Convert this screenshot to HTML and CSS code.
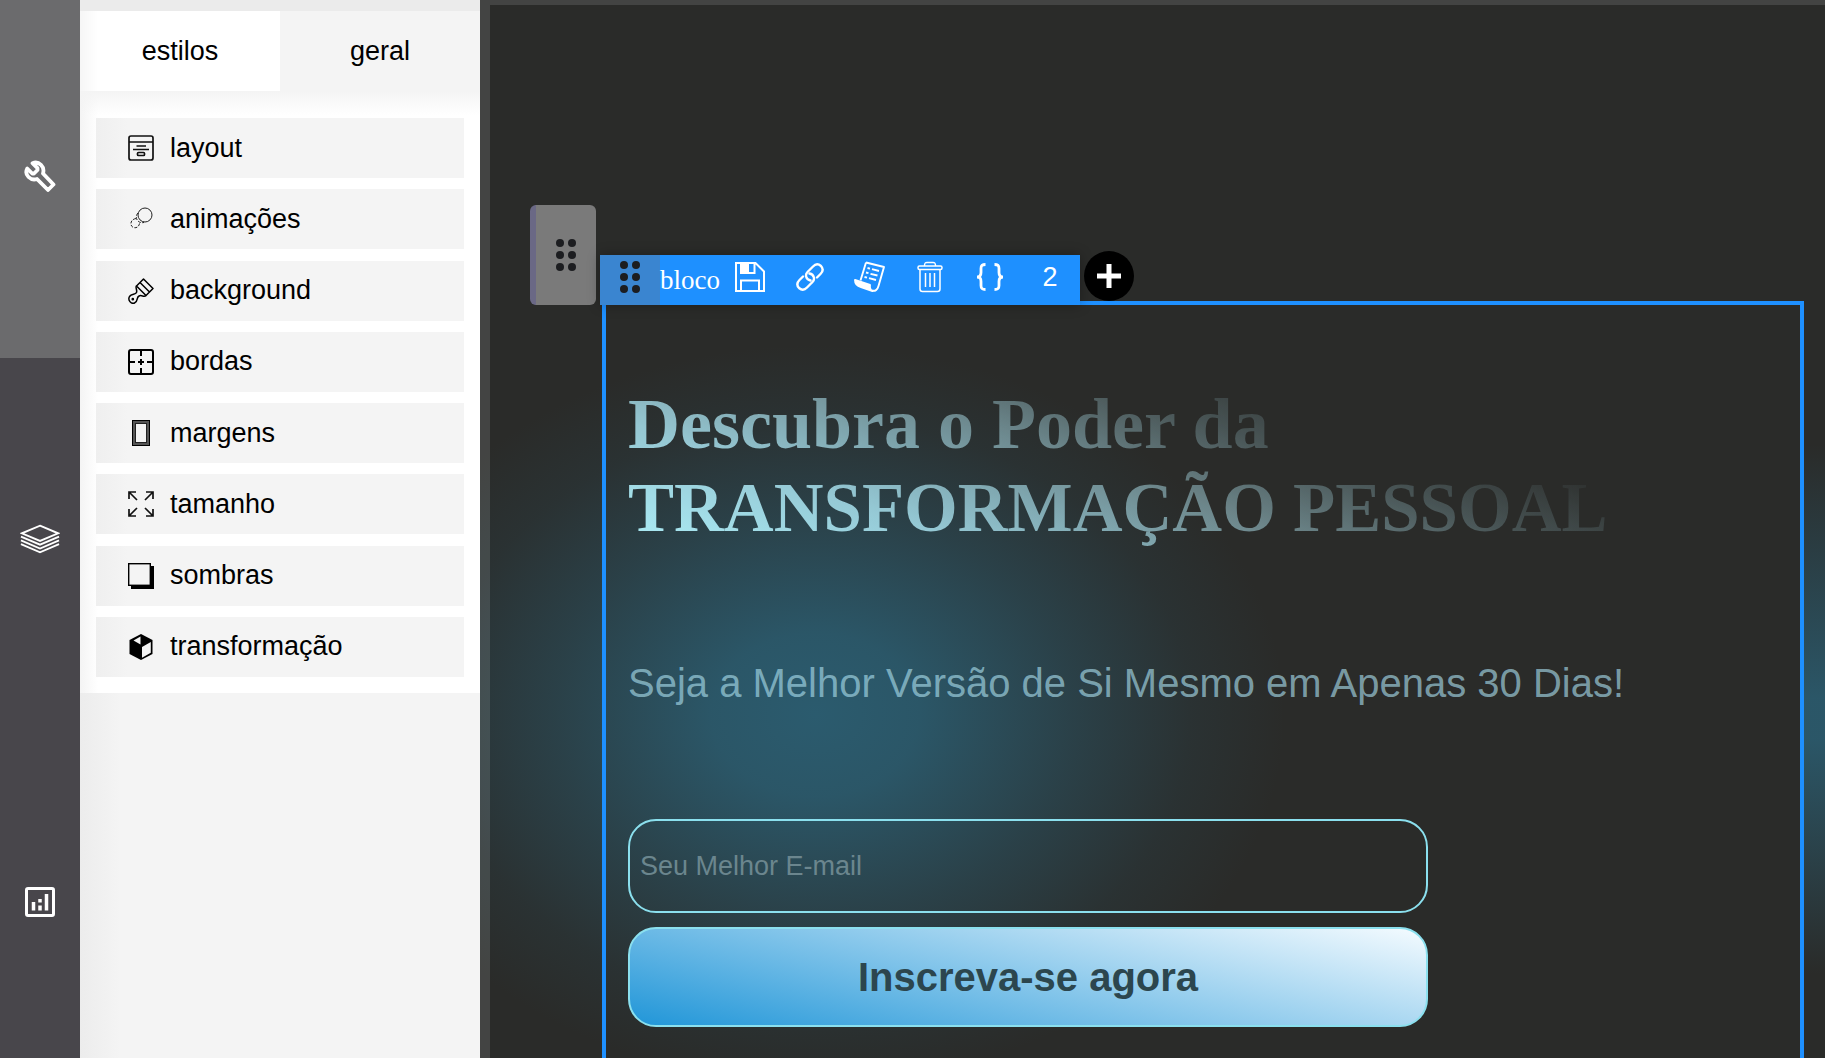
FILE: index.html
```html
<!DOCTYPE html>
<html lang="pt-BR">
<head>
    <meta charset="UTF-8">
    <meta name="viewport" content="width=device-width, initial-scale=1.0">
    <title>Editor</title>
    <link rel="stylesheet" href="styles.css">
</head>
<body>

    <nav class="rail">
        <button class="rail-item active" aria-label="ferramentas">
            <svg width="32" height="32" viewBox="0 0 32 32" fill="none" stroke="#fff" stroke-width="3.800" stroke-linejoin="round">
                <path d="M8.500 3.200 L13.500 8.200 V10 L10 13.500 H8.200 L3.200 8.500 C1.500 12 2.500 15 4.500 17 C7 19.500 10 20 13 19 L24 30 L29.500 24.500 L19 13.500 C20 10 19.300 7 17 4.800 C14.500 2.400 11.500 1.900 8.500 3.200 Z"/>
            </svg>
        </button>
        <button class="rail-item" aria-label="camadas">
            <svg width="40" height="32" viewBox="0 0 42 32" fill="none" stroke="#fff" stroke-width="2">
                <path d="M21 2 L40 10 L21 18 L2 10 Z"/>
                <path d="M1 13.500 L21 22 L41 13.500 M1 17.500 L21 26 L41 17.500 M1 21.500 L21 30 L41 21.500"/>
            </svg>
        </button>
        <button class="rail-item" aria-label="estatísticas">
            <svg width="32" height="32" viewBox="0 0 32 32" fill="none" stroke="#fff" stroke-width="3">
                <rect x="2.500" y="2.500" width="27" height="27" rx="1.500"/>
                <path d="M9.500 16 V24.500 M16 19.500 V24.500 M16 13 V16.500 M22.500 8 V24.500" stroke-width="3.500"/>
            </svg>
        </button>
    </nav>

    <aside class="panel">
        <div class="tabs">
            <button class="tab active">estilos</button>
            <button class="tab">geral</button>
        </div>
        <div class="list">
            <button class="item">
                <svg width="26" height="26" viewBox="0 0 26 26" fill="none" stroke="#111" stroke-width="1.700">
                    <rect x="1" y="1" width="24" height="24" rx="2"/>
                    <path d="M1 7 H25 M8.500 11 H18 M5 14.500 H21"/>
                    <rect x="9.500" y="17.500" width="7" height="3" rx="1"/>
                </svg>
                layout
            </button>
            <button class="item">
                <svg width="26" height="26" viewBox="0 0 26 26" fill="none" stroke="#222" stroke-width="1">
                    <circle cx="17" cy="9" r="7"/>
                    <path d="M10 7 C6 11 9.500 18 16 16.500" stroke-dasharray="3 1.500"/>
                    <path d="M8 12.500 C2 13.500 1.500 20 5.500 21.500 C8.500 22.500 11 20.500 11.500 17.500" stroke-dasharray="3 1.500"/>
                </svg>
                animações
            </button>
            <button class="item">
                <svg width="26" height="26" viewBox="0 0 26 26" fill="none" stroke="#000" stroke-width="1.500" stroke-linejoin="round">
                    <path d="M15.500 1 L25 10.500 L18 17.500 L8.500 8 Z M12 4.500 L21.500 14"/>
                    <path d="M8.500 8 C7 9.500 9.500 12 8.500 14.500 C7.500 17 3.500 15.500 1.500 18.500 C-0.500 22 3 26.500 6.500 25 C10.500 23.500 8 19.500 11 18 C13.500 16.500 16 19.500 18 17.500"/>
                    <circle cx="4.800" cy="21.200" r="0.600"/>
                </svg>
                background
            </button>
            <button class="item">
                <svg width="26" height="26" viewBox="0 0 26 26" fill="none" stroke="#000" stroke-width="2">
                    <rect x="1" y="1" width="24" height="24" rx="2"/>
                    <path d="M13 1 V7 M13 19 V25 M1 13 H7 M19 13 H25 M13 10 V16 M10 13 H16"/>
                </svg>
                bordas
            </button>
            <button class="item">
                <svg width="26" height="26" viewBox="0 0 26 26" fill="none">
                    <rect x="5.500" y="1.500" width="15" height="23" stroke="#555" stroke-width="3"/>
                    <rect x="4.500" y="0.500" width="17" height="25" stroke="#000"/>
                    <rect x="7.500" y="3.500" width="11" height="19" stroke="#222"/>
                </svg>
                margens
            </button>
            <button class="item">
                <svg width="26" height="26" viewBox="0 0 26 26" fill="none" stroke="#111" stroke-width="1.700">
                    <path d="M1 8 V1 H8 M1 1 L9 9 M18 1 H25 V8 M25 1 L17 9 M1 18 V25 H8 M1 25 L9 17 M18 25 H25 V18 M25 25 L17 17"/>
                </svg>
                tamanho
            </button>
            <button class="item">
                <svg width="26" height="26" viewBox="0 0 26 26">
                    <path d="M3 3 H26 V26 H3 Z"/>
                    <path d="M22 0 H26 V3 H22 Z M0 22 H3 V26 H0 Z" fill="#f4f4f4"/>
                    <rect x="0.700" y="0.700" width="21.600" height="21.600" fill="#f4f4f4" stroke="#000" stroke-width="1.400"/>
                </svg>
                sombras
            </button>
            <button class="item">
                <svg width="26" height="26" viewBox="0 0 26 26">
                    <path d="M13 0 L24.500 6 V20 L13 26 L1.500 20 V6 Z"/>
                    <path d="M12.500 2.500 V10.500 L5.500 6.500 Z M14 13 L22.800 8 V18.800 L14 23.800 Z" fill="#f4f4f4"/>
                </svg>
                transformação
            </button>
        </div>
    </aside>

    <main class="canvas">
        <button class="drag-handle" aria-label="mover seção">
            <svg width="20" height="32" viewBox="0 0 20 32" fill="#1c1d20">
                <circle cx="4" cy="4" r="4"/><circle cx="16" cy="4" r="4"/>
                <circle cx="4" cy="16" r="4"/><circle cx="16" cy="16" r="4"/>
                <circle cx="4" cy="28" r="4"/><circle cx="16" cy="28" r="4"/>
            </svg>
        </button>

        <section class="block">
            <div class="toolbar">
                <button class="tool grip" aria-label="mover bloco">
                    <svg width="20" height="32" viewBox="0 0 20 32" fill="#1c1d20">
                        <circle cx="4" cy="4" r="4"/><circle cx="16" cy="4" r="4"/>
                        <circle cx="4" cy="16" r="4"/><circle cx="16" cy="16" r="4"/>
                        <circle cx="4" cy="28" r="4"/><circle cx="16" cy="28" r="4"/>
                    </svg>
                </button>
                <span class="block-name">bloco</span>
                <button class="tool" aria-label="salvar">
                    <svg width="30" height="30" viewBox="0 0 30 30" fill="none" stroke="#fff" stroke-width="2">
                        <path d="M1 1 H20.500 L29 9.500 V29 H1 Z M6 29 V18.500 H24 V29 M19.500 1 V11 H6 V1"/>
                        <path d="M6 1 H13 V11 H6 Z" fill="#fff"/>
                    </svg>
                </button>
                <button class="tool" aria-label="link">
                    <svg width="28" height="28" viewBox="0 0 28 28" fill="none" stroke="#fff" stroke-width="2.400" stroke-linecap="round">
                        <path d="M14.500 17.500 C9.500 16.500 9 11.500 11.500 9 L17 3.500 C19.500 0.800 22.500 0.800 25 3 C27.300 5.500 27 8.500 24.500 11 L21 14.500" />
                        <path d="M13.500 10.500 C18.500 11.500 19 16.500 16.500 19 L11 24.500 C8.500 27.200 5.500 27.200 3 25 C0.700 22.500 1 19.500 3.500 17 L7 13.500"/>
                    </svg>
                </button>
                <button class="tool" aria-label="script">
                    <svg width="32" height="32" viewBox="0 0 32 32" fill="none" stroke="#fff" stroke-width="1.900" stroke-linejoin="round">
                        <path d="M12 1.500 L30 6 L24.500 25 C23.500 29 21 30.500 18 29.500 M12 1.500 L6.500 19.500"/>
                        <path d="M1 19 L16 24 C15.500 27 16.500 29 18.500 30 L7 26 C3 25 1 22 1 19 Z" fill="#fff"/>
                        <path d="M13.500 7 L16 7.600 M18 8.200 L25 10 M12 11.500 L14.500 12.200 M16.500 12.800 L23.500 14.500 M10.500 16 L13 16.700 M15 17.200 L22 19"/>
                    </svg>
                </button>
                <button class="tool" aria-label="excluir">
                    <svg width="26" height="32" viewBox="0 0 26 32" fill="none" stroke="#fff" stroke-width="1.500">
                        <rect x="1" y="5" width="24" height="3.500" rx="1.500"/>
                        <path d="M7.500 5 C7.500 2 8 1.500 10 1.500 H16 C18 1.500 18.500 2 18.500 5 M3 8.500 V28 C3 30 4 30.500 5.500 30.500 H20.500 C22 30.500 23 30 23 28 V8.500"/>
                        <path d="M8.500 12 V26 M13 12 V26 M17.500 12 V26"/>
                    </svg>
                </button>
                <button class="tool" aria-label="código">
                    <svg width="28" height="28" viewBox="0 0 28 28" fill="none" stroke="#fff" stroke-width="2.800">
                        <path d="M9.500 1.500 C6 1.500 5 2.500 5 5.500 V9.500 C5 12.500 4 14 1 14 C4 14 5 15.500 5 18.500 V22.500 C5 25.500 6 26.500 9.500 26.500"/>
                        <path d="M18.500 1.500 C22 1.500 23 2.500 23 5.500 V9.500 C23 12.500 24 14 27 14 C24 14 23 15.500 23 18.500 V22.500 C23 25.500 22 26.500 18.500 26.500"/>
                    </svg>
                </button>
                <button class="tool">2</button>
                <button class="add" aria-label="adicionar">
                    <svg width="26" height="26" viewBox="0 0 26 26" stroke="#fff" stroke-width="5">
                        <path d="M13 1 V25 M1 13 H25"/>
                    </svg>
                </button>
            </div>

            <h1>Descubra o Poder da<br><span class="strong">TRANSFORMAÇÃO PESSOAL</span></h1>
            <p class="subtitle">Seja a Melhor Versão de Si Mesmo em Apenas 30 Dias!</p>
            <form class="signup">
                <input type="email" placeholder="Seu Melhor E-mail" aria-label="Seu Melhor E-mail">
                <button type="button">Inscreva-se agora</button>
            </form>
        </section>
    </main>

</body>
</html>
```
FILE: styles.css
```css
* {
    box-sizing: border-box;
}

body {
    margin: 0;
    height: 100vh;
    display: flex;
    overflow: hidden;
    font-family: "Liberation Sans", Arial, sans-serif;
    font-size: 27px;
    background-color: #f4f4f4;
}

button {
    font: inherit;
    color: inherit;
    border: none;
    padding: 0;
    cursor: pointer;
}

svg {
    display: block;
    flex: none;
}

/* left rail */
.rail {
    flex: 0 0 80px;
    display: flex;
    flex-direction: column;
    gap: 5px;
    background-color: #48464b;
    overflow: hidden;
}

.rail-item {
    flex: 0 0 358px;
    display: flex;
    align-items: center;
    justify-content: center;
    padding-bottom: 6px;
    background-color: transparent;
}

.rail-item.active {
    background-color: #6b6b6d;
}

/* styles panel */
.panel {
    flex: 0 0 400px;
    background: linear-gradient(to right, #ececec, #f4f4f4 40px);
}

.tabs {
    display: flex;
    border-top: 11px solid #ebebeb;
    background-color: #f4f4f4;
}

.tab {
    flex: 1;
    height: 80px;
    background-color: transparent;
}

.tab.active {
    background: linear-gradient(to right, #f6f6f6, #fff 18px);
}

.list {
    display: flex;
    flex-direction: column;
    justify-content: space-between;
    min-height: 602px;
    padding: 27px 16px 16px;
    background: linear-gradient(#f4f4f4, rgba(255, 255, 255, 0) 24px), linear-gradient(to right, #f4f4f4, #fff 18px);
}

.item {
    display: flex;
    align-items: center;
    gap: 16px;
    height: 60px;
    padding-left: 32px;
    background: linear-gradient(to right, #efefef, #f4f4f4 32px);
}

/* canvas */
.canvas {
    flex: 1;
    min-width: 0;
    display: flex;
    align-items: flex-start;
    padding: 200px 21px 0 40px;
    border: solid rgba(255, 255, 255, 0.12);
    border-width: 5px 0 0 10px;
    background-color: #2a2b29;
    background-image:
        radial-gradient(ellipse 470px 370px at 335px 715px, #2b5b6e, rgba(43, 91, 110, 0.9) 22%, rgba(43, 91, 110, 0.45) 55%, rgba(43, 91, 110, 0.14) 80%, rgba(43, 91, 110, 0)),
        linear-gradient(rgba(43, 91, 110, 0) 42%, rgba(43, 91, 110, 0.9) 66%, rgba(43, 91, 110, 0.9) 70%, rgba(43, 91, 110, 0) 92%);
    background-size: 100% 100%, 21px 100%;
    background-position: 0 0, 100% 0;
    background-repeat: no-repeat;
    background-origin: border-box;
}

.drag-handle {
    flex: 0 0 66px;
    height: 100px;
    display: flex;
    align-items: center;
    justify-content: center;
    border-left: 6px solid #6a6885;
    border-radius: 6px;
    background-color: #7a7a7a;
}

.block {
    position: relative;
    flex: 1;
    align-self: stretch;
    margin: 96px 0 0 6px;
    padding: 78px 22px 0;
    border: 4px solid #1e90ff;
    border-bottom: none;
}

.toolbar {
    position: absolute;
    left: -6px;
    bottom: 100%;
    display: flex;
    height: 50px;
    color: #fff;
    background-color: #1e90ff;
    box-shadow: 0 0 12px rgba(0, 0, 0, 0.3);
}

.tool {
    width: 60px;
    display: flex;
    align-items: center;
    justify-content: center;
    padding-bottom: 6px;
    background-color: transparent;
}

.grip {
    background-color: #3a85d0;
}

.block-name {
    align-self: center;
    font-family: "Liberation Serif", "Times New Roman", serif;
}

.add {
    position: absolute;
    left: 100%;
    top: -4px;
    width: 50px;
    height: 50px;
    display: flex;
    align-items: center;
    justify-content: center;
    margin-left: 4px;
    border-radius: 50%;
    background-color: #000;
}

h1 {
    margin: 0;
    font-family: "Liberation Serif", "Times New Roman", serif;
    font-size: 72px;
    line-height: 83px;
    color: transparent;
    background: linear-gradient(20deg, #a8e6f0 5%, rgba(168, 225, 238, 0.85) 22%, rgba(168, 215, 225, 0.52) 44%, rgba(168, 215, 225, 0.24) 58%, rgba(168, 215, 225, 0) 74%);
    -webkit-background-clip: text;
    background-clip: text;
}

h1 .strong {
    font-size: 69px;
}

.subtitle {
    margin: 110px 0 0;
    font-size: 40px;
    line-height: 46px;
    color: rgba(168, 220, 235, 0.65);
}

.signup {
    max-width: 800px;
    display: flex;
    flex-direction: column;
    gap: 14px;
    margin-top: 113px;
}

.signup input {
    height: 94px;
    padding: 0 10px;
    font: inherit;
    color: #a8e6f0;
    border: 2px solid #8be0ee;
    border-radius: 28px;
    background-color: transparent;
}

.signup input::placeholder {
    color: #6b868e;
}

.signup button {
    height: 100px;
    font-size: 40px;
    font-weight: bold;
    color: #2c464e;
    border: 2px solid #8be0ee;
    border-radius: 28px;
    background: linear-gradient(13deg, #2196d8, #f4fbff);
}
```
